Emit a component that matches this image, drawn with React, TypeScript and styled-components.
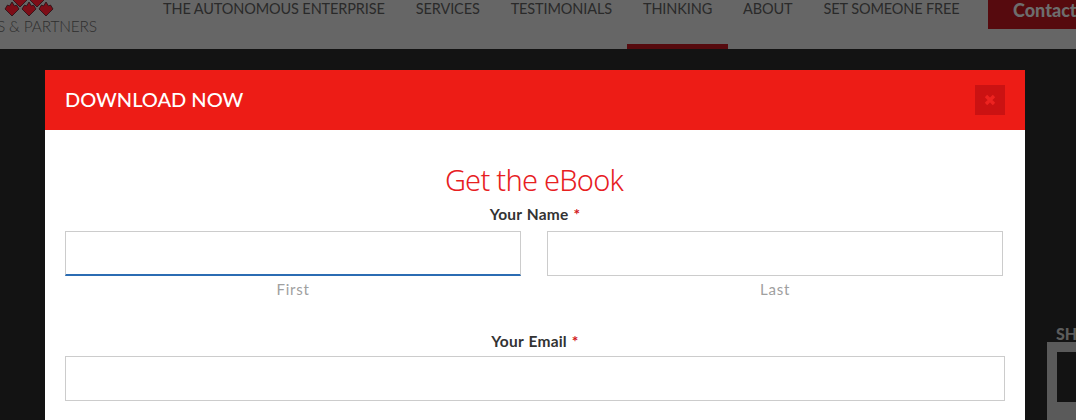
import React from "react";
import styled, { createGlobalStyle } from "styled-components";

const Global = createGlobalStyle`
  html, body { margin: 0; padding: 0; background: #131313; overflow: hidden; }
  * { box-sizing: border-box; }
`;

const Page = styled.div`
  position: relative;
  width: 1076px;
  height: 420px;
  overflow: hidden;
  background: #131313;
  font-family: Lato, "Open Sans", sans-serif;
`;

const TopBar = styled.header`
  display: flex;
  height: 49px;
  background: #666;
  overflow: hidden;
`;

const Logo = styled.div`
  width: 163px;
  flex: none;
  display: flex;
  flex-direction: column;
  align-items: flex-start;
`;

const LogoMark = styled.svg`
  display: block;
  width: 50px;
  height: 17px;
  margin-left: 4px;
`;

const LogoText = styled.span`
  margin-left: -3px;
  white-space: nowrap;
  font: 300 15.5px/18px Lato, sans-serif;
  letter-spacing: -0.2px;
  color: #2e2e2e;
`;

const Nav = styled.nav`
  display: flex;
  height: 49px;
  margin-left: -15.5px;
`;

const NavItem = styled.a<{ $active?: boolean }>`
  display: block;
  height: 49px;
  padding: 0 15.5px;
  font: 400 14.5px/18px Lato, sans-serif;
  letter-spacing: -0.12px;
  color: #2a2a2a;
  white-space: nowrap;
  border-bottom: 5px solid ${(p) => (p.$active ? "#560a0e" : "transparent")};
`;

const Contact = styled.a`
  flex: none;
  position: absolute;
  left: 988px;
  top: 0;
  width: 120px;
  height: 29px;
  padding-left: 25px;
  background: #560a0e;
  color: #6d6d6d;
  font: 900 18px/20px Lato, sans-serif;
  white-space: nowrap;
`;

const Behind = styled.div`
  display: flex;
  height: 371px;
`;

const HiddenHeading = styled.div`
  width: 1047px;
  padding: 10px 0 0 339px;
  font: 300 44px/50px Lato, sans-serif;
  letter-spacing: 6px;
  color: #666;
`;

const ShareColumn = styled.div`
  display: flex;
  flex-direction: column;
  width: 29px;
`;

const ShareLabel = styled.span`
  margin: 276px 0 0 9px;
  height: 21px;
  font: 900 16px/17px Lato, sans-serif;
  color: #5c5c5c;
`;

const ShareBox = styled.div`
  width: 60px;
  height: 70px;
  flex: none;
  border: 10px solid #5a5a5a;
  background: #131313;
`;

const Modal = styled.section`
  position: absolute;
  left: 45px;
  top: 70px;
  width: 980px;
  height: 360px;
  background: #fff;
`;

const ModalHead = styled.div`
  display: flex;
  align-items: center;
  justify-content: space-between;
  height: 60px;
  padding: 0 20px;
  background: #ed1c16;
`;

const ModalTitle = styled.h2`
  margin: 0 0 2px;
  color: #fff;
  font: 500 20px/24px Lato, sans-serif;
`;

const Close = styled.button`
  display: flex;
  align-items: center;
  justify-content: center;
  width: 30px;
  height: 30px;
  padding: 0;
  border: 0;
  background: #cb1212;
`;

const ModalBody = styled.div`
  padding: 29px 20px 0;
`;

const Heading = styled.h1`
  margin: 0;
  padding-right: 2px;
  text-align: center;
  color: #e7201f;
  font: 300 29px/42px "Noto Sans", "Open Sans", sans-serif;
  letter-spacing: -0.75px;
`;

const Label = styled.div`
  margin-top: 5px;
  text-align: center;
  color: #333;
  font: 700 15.5px/16px Lato, sans-serif;
  letter-spacing: 0.2px;
  word-spacing: 1px;
`;

const Star = styled.span`
  color: #d2171b;
`;

const NameRow = styled.div`
  display: grid;
  grid-template-columns: 456px 456px;
  gap: 26px;
  margin-top: 9px;
`;

const Field = styled.div`
  display: flex;
  flex-direction: column;
`;

const Input = styled.input<{ $focus?: boolean }>`
  display: block;
  width: 100%;
  height: 45px;
  padding: 0 10px;
  background: #fff;
  outline: 0;
  border: 1px solid #ccc;
  border-bottom: ${(p) => (p.$focus ? "2px solid #2b6cb3" : "1px solid #ccc")};
`;

const Hint = styled.div`
  margin-top: 3px;
  text-align: center;
  color: #a0a0a0;
  font: 400 15px/20px Lato, sans-serif;
  letter-spacing: 0.75px;
`;

const EmailLabel = styled(Label)`
  margin-top: 34px;
`;

const EmailInput = styled(Input)`
  margin-top: 7px;
`;

const Arrow = ({ x, y }: { x: number; y: number }) => (
  <path
    transform={`translate(${x} ${y})`}
    d="M0 -7 L2.5 -3 L4.5 -4 L7 0 L3 4 L0 7 L-3 4 L-7 0 L-4.5 -4 L-2.5 -3 Z"
    fill="#7d0d17"
    stroke="#241015"
    strokeWidth="0.8"
  />
);

export default function App() {
  return (
    <Page>
      <Global />
      <TopBar>
        <Logo>
          <LogoMark viewBox="0 0 50 17">
            <Arrow x={8} y={9} />
            <Arrow x={25} y={9} />
            <Arrow x={42} y={9} />
            <Arrow x={16} y={0} />
            <Arrow x={33} y={0} />
          </LogoMark>
          <LogoText>S &amp; PARTNERS</LogoText>
        </Logo>
        <Nav>
          <NavItem>THE AUTONOMOUS ENTERPRISE</NavItem>
          <NavItem>SERVICES</NavItem>
          <NavItem>TESTIMONIALS</NavItem>
          <NavItem $active>THINKING</NavItem>
          <NavItem>ABOUT</NavItem>
          <NavItem>SET SOMEONE FREE</NavItem>
        </Nav>
        <Contact>Contact</Contact>
      </TopBar>
      <Behind>
        <HiddenHeading>d f</HiddenHeading>
        <ShareColumn>
          <ShareLabel>SH</ShareLabel>
          <ShareBox />
          <ShareBox />
        </ShareColumn>
      </Behind>
      <Modal>
        <ModalHead>
          <ModalTitle>DOWNLOAD NOW</ModalTitle>
          <Close aria-label="Close">
            <svg width="12" height="12" viewBox="0 0 12 12">
              <path d="M2 2 L10 10 M10 2 L2 10" stroke="#ed2320" strokeWidth="3.4" />
            </svg>
          </Close>
        </ModalHead>
        <ModalBody>
          <Heading>Get the eBook</Heading>
          <Label>
            Your Name <Star>*</Star>
          </Label>
          <NameRow>
            <Field>
              <Input $focus />
              <Hint>First</Hint>
            </Field>
            <Field>
              <Input />
              <Hint>Last</Hint>
            </Field>
          </NameRow>
          <EmailLabel>
            Your Email <Star>*</Star>
          </EmailLabel>
          <EmailInput />
        </ModalBody>
      </Modal>
    </Page>
  );
}
